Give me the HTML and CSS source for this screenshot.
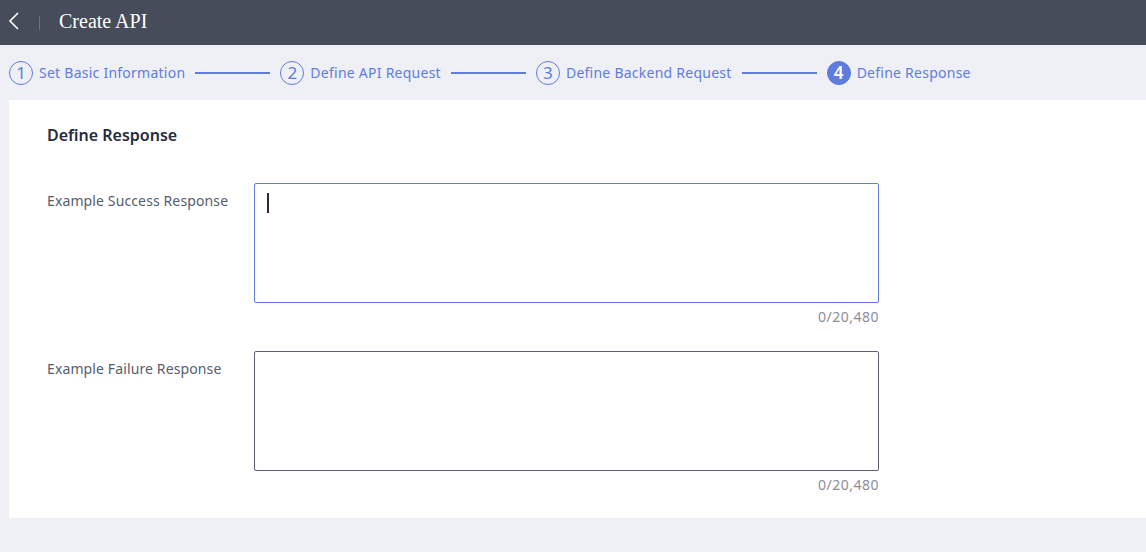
FILE: index.html
```html
<!DOCTYPE html>
<html>
<head>
<meta charset="utf-8">
<link rel="stylesheet" href="styles.css">
</head>
<body>
<header class="topbar">
  <span class="back">
    <svg width="12" height="18" viewBox="0 0 12 18"><path d="M10 1 L2 9 L10 17" fill="none" stroke="#ffffff" stroke-width="1.6"/></svg>
  </span>
  <span class="sep"></span>
  <h1 class="title">Create API</h1>
</header>
<nav class="steps">
  <div class="step"><span class="num">1</span><span class="label">Set Basic Information</span></div>
  <span class="line"></span>
  <div class="step"><span class="num">2</span><span class="label">Define API Request</span></div>
  <span class="line"></span>
  <div class="step"><span class="num">3</span><span class="label">Define Backend Request</span></div>
  <span class="line"></span>
  <div class="step active"><span class="num">4</span><span class="label">Define Response</span></div>
</nav>
<main class="panel">
  <h2 class="section-title">Define Response</h2>
  <div class="row">
    <label class="field-label">Example Success Response</label>
    <div class="field">
      <div class="textarea focused"><span class="caret"></span></div>
      <div class="count">0/20,480</div>
    </div>
  </div>
  <div class="row">
    <label class="field-label">Example Failure Response</label>
    <div class="field">
      <div class="textarea"></div>
      <div class="count">0/20,480</div>
    </div>
  </div>
</main>
</body>
</html>
```
FILE: styles.css
```css
* { box-sizing: border-box; }
html, body { margin: 0; padding: 0; }
body {
  background: #eef0f5;
  font-family: "Noto Sans", "Open Sans", sans-serif;
  width: 1146px;
  height: 552px;
  overflow: hidden;
}
.topbar {
  height: 45px;
  background: #474c5a;
  display: flex;
  align-items: center;
  padding-left: 8px;
}
.back { display: flex; width: 12px; height: 18px; margin-top: -3px; }
.sep {
  width: 1px;
  height: 14px;
  background: #6b7080;
  margin-left: 19px;
}
.title {
  margin: -3px 0 0 19px;
  font-family: "Liberation Serif", "DejaVu Serif", serif;
  font-weight: normal;
  font-size: 20px;
  color: #ffffff;
}
.steps {
  height: 55px;
  display: flex;
  align-items: center;
  padding-left: 9px;
}
.step { display: flex; align-items: center; }
.num {
  width: 24px;
  height: 24px;
  border: 1px solid #5e7ce0;
  border-radius: 50%;
  color: #5e7ce0;
  display: flex;
  align-items: center;
  justify-content: center;
  font-size: 17px;
  line-height: 1;
}
.step.active .num {
  background: #5e7ce0;
  color: #fff;
  font-weight: 600;
}
.label {
  margin-left: 6px;
  font-size: 14px;
  letter-spacing: 0.25px;
  color: #5e7ce0;
}
.line {
  width: 75px;
  height: 2px;
  background: #5e7ce0;
  margin: 0 10px;
}
.panel {
  margin-left: 9px;
  height: 418px;
  background: #ffffff;
  padding: 23px 0 0 38px;
}
.section-title {
  margin: 0 0 36px 0;
  font-size: 16px;
  line-height: 24px;
  font-weight: 600;
  color: #252b3a;
}
.row { display: flex; margin-bottom: 24px; }
.field-label {
  width: 207px;
  padding-top: 8px;
  font-size: 14px;
  letter-spacing: 0.12px;
  line-height: 20px;
  color: #575d6c;
}
.field { width: 625px; }
.textarea {
  height: 120px;
  border: 1px solid #5c6070;
  border-radius: 2px;
  padding: 9px 12px;
}
.textarea.focused { border-color: #5e7ce0; }
.caret {
  display: block;
  width: 2px;
  height: 20px;
  background: #252b3a;
}
.count {
  text-align: right;
  font-size: 14px;
  letter-spacing: 0.5px;
  line-height: 20px;
  margin-top: 4px;
  color: #8a8e99;
}
```
